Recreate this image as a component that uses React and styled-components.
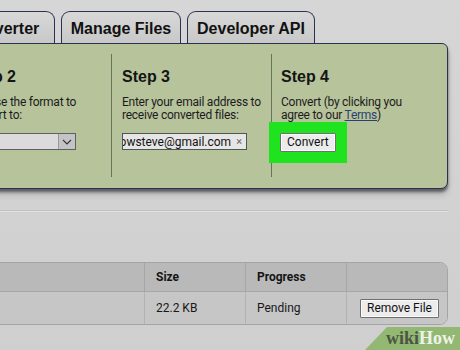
import React from 'react';
import styled, { createGlobalStyle } from 'styled-components';

const GlobalStyle = createGlobalStyle`
  body {
    margin: 0;
    background: #d1d1d1;
    overflow: hidden;
    font-family: "Liberation Sans", Arial, sans-serif;
    color: #141414;
  }
`;

const Page = styled.div`
  position: relative;
  width: 460px;
  height: 350px;
  overflow: hidden;
  background: linear-gradient(#d6d6d6, #cfcfcf);
`;

const Shifted = styled.div`
  width: 658px;
  margin-left: -210px;
`;

const TabRow = styled.div`
  display: flex;
  gap: 6px;
  padding: 11px 0 0 126px;
`;

const Tab = styled.div`
  height: 32px;
  width: ${(p) => p.$w}px;
  box-sizing: border-box;
  display: flex;
  align-items: center;
  justify-content: center;
  padding-top: 2px;
  white-space: nowrap;
  border: 1px solid #2b3150;
  border-bottom: none;
  border-radius: 9px 9px 0 0;
  background: linear-gradient(#d8d8d8, #c8c8c8);
  font-weight: bold;
  font-size: 16px;
  color: #111;
`;

const Panel = styled.div`
  display: grid;
  grid-template-columns: 160px 160px 160px 1fr;
  height: 146px;
  box-sizing: border-box;
  padding: 10px 0 11px;
  background: #b7c39b;
  border: 1px solid #2b3150;
  border-radius: 0 6px 7px 0;
  box-shadow: 0 3px 3px rgba(20, 20, 30, 0.55), 0 6px 6px rgba(0, 0, 0, 0.15);
`;

const Step = styled.div`
  padding: 0 6px 0 ${(p) => p.$pad || 10}px;
  border-left: ${(p) => (p.$first ? 'none' : '1px solid #6a7257')};
`;

const StepTitle = styled.div`
  margin-top: 13px;
  font-size: 16px;
  line-height: 20px;
  font-weight: bold;
  color: #151515;
`;

const StepText = styled.div`
  margin-top: 9px;
  font-family: Roboto, "Liberation Sans", sans-serif;
  font-size: 12px;
  letter-spacing: -0.25px;
  line-height: 13px;
  white-space: nowrap;
  color: #1c1c1c;
`;

const TermsLink = styled.a`
  color: #2d3f73;
  text-decoration: underline;
`;

const Select = styled.div`
  margin-top: 11px;
  width: 108px;
  height: 17px;
  box-sizing: border-box;
  display: flex;
  justify-content: flex-end;
  border: 1px solid #5b6262;
  background: #dcdadc;
`;

const SelectArrow = styled.div`
  width: 16px;
  display: flex;
  align-items: center;
  justify-content: center;
  background: #c4c4c6;
  border-left: 1px solid #9a9a9a;
`;

const EmailBox = styled.div`
  margin-top: 11px;
  width: 125px;
  height: 17px;
  box-sizing: border-box;
  display: flex;
  align-items: center;
  justify-content: flex-end;
  overflow: hidden;
  border: 1px solid #4f5656;
  background: #e6e6e6;
  font-family: Roboto, "Liberation Sans", sans-serif;
  font-size: 12px;
`;

const EmailText = styled.span`
  flex-shrink: 0;
  white-space: nowrap;
`;

const ClearMark = styled.span`
  flex-shrink: 0;
  color: #666;
  font-size: 11px;
  padding: 0 4px 0 5px;
`;

const Highlight = styled.div`
  display: inline-block;
  margin-left: -12px;
  padding: 10px 11px 11px;
  background: #1fe31f;
`;

const Button = styled.button`
  font-family: Roboto, "Liberation Sans", sans-serif;
  font-size: 12px;
  height: ${(p) => p.$h}px;
  padding: 0 ${(p) => p.$px}px;
  color: #111;
  background: #ececec;
  border: 1px solid #6f6f6f;
  border-radius: 1px;
  box-shadow: inset 0 0 0 1px #fafafa;
  white-space: nowrap;
`;

const Rule = styled.div`
  margin-top: 21px;
  width: 658px;
  border-top: 1px solid #c2c2c2;
  border-bottom: 1px solid #e2e2e2;
`;

const Table = styled.div`
  margin-top: 50px;
  display: grid;
  grid-template-columns: 1fr 101px 101px 101px;
  border: 1px solid #a4a4a4;
  border-radius: 0 8px 8px 0;
  overflow: hidden;
  font-family: Roboto, "Liberation Sans", sans-serif;
`;

const HeadCell = styled.div`
  height: 29px;
  box-sizing: border-box;
  display: flex;
  align-items: center;
  padding-left: 11px;
  background: #b9b9b9;
  border-left: ${(p) => (p.$first ? 'none' : '1px solid #a6a6a6')};
  border-bottom: 1px solid #a6a6a6;
  font-size: 12px;
  font-weight: bold;
  color: #151515;
`;

const Cell = styled.div`
  height: 32px;
  box-sizing: border-box;
  display: flex;
  align-items: center;
  padding-left: ${(p) => p.$pad || 11}px;
  background: #c6c6c6;
  border-left: ${(p) => (p.$first ? 'none' : '1px solid #b2b2b2')};
  font-size: 12px;
  color: #181818;
`;

const Watermark = styled.div`
  position: absolute;
  right: 0;
  bottom: 0;
  width: 95px;
  height: 23px;
  background: #93b873;
  clip-path: polygon(22px 0, 100% 0, 100% 100%, 0 100%);
  display: flex;
  align-items: center;
  justify-content: flex-end;
  padding-right: 5px;
  box-sizing: border-box;
  font-family: "Liberation Serif", "DejaVu Serif", serif;
  font-weight: bold;
  font-size: 18px;
`;

const WikiPart = styled.span`
  color: #4b5542;
`;

const HowPart = styled.span`
  color: #eef3e8;
`;

export default function App() {
  return (
    <Page>
      <GlobalStyle />
      <Shifted>
        <TabRow>
          <Tab $w={139}>File Converter</Tab>
          <Tab $w={120}>Manage Files</Tab>
          <Tab $w={128}>Developer API</Tab>
        </TabRow>
        <Panel>
          <Step $first>
            <StepTitle>Step 1</StepTitle>
            <StepText>Select files to convert</StepText>
          </Step>
          <Step $first $pad={17}>
            <StepTitle>Step 2</StepTitle>
            <StepText>
              Choose the format to
              <br />
              convert to:
            </StepText>
            <Select>
              <SelectArrow>
                <svg width="10" height="6" viewBox="0 0 10 6">
                  <path d="M1 1 L5 5 L9 1" fill="none" stroke="#333" strokeWidth="1.1" />
                </svg>
              </SelectArrow>
            </Select>
          </Step>
          <Step>
            <StepTitle>Step 3</StepTitle>
            <StepText>
              Enter your email address to
              <br />
              receive converted files:
            </StepText>
            <EmailBox>
              <EmailText>howsteve@gmail.com</EmailText>
              <ClearMark>×</ClearMark>
            </EmailBox>
          </Step>
          <Step $pad={9}>
            <StepTitle>Step 4</StepTitle>
            <StepText>
              Convert (by clicking you
              <br />
              agree to our <TermsLink>Terms</TermsLink>)
            </StepText>
            <Highlight>
              <Button $h={19} $px={6}>Convert</Button>
            </Highlight>
          </Step>
        </Panel>
        <Rule />
        <Table>
          <HeadCell $first>File Name</HeadCell>
          <HeadCell>Size</HeadCell>
          <HeadCell>Progress</HeadCell>
          <HeadCell />
          <Cell $first>example-file.docx</Cell>
          <Cell>22.2 KB</Cell>
          <Cell>Pending</Cell>
          <Cell $pad={13}>
            <Button $h={19} $px={6}>Remove File</Button>
          </Cell>
        </Table>
      </Shifted>
      <Watermark>
        <WikiPart>wiki</WikiPart>
        <HowPart>How</HowPart>
      </Watermark>
    </Page>
  );
}
